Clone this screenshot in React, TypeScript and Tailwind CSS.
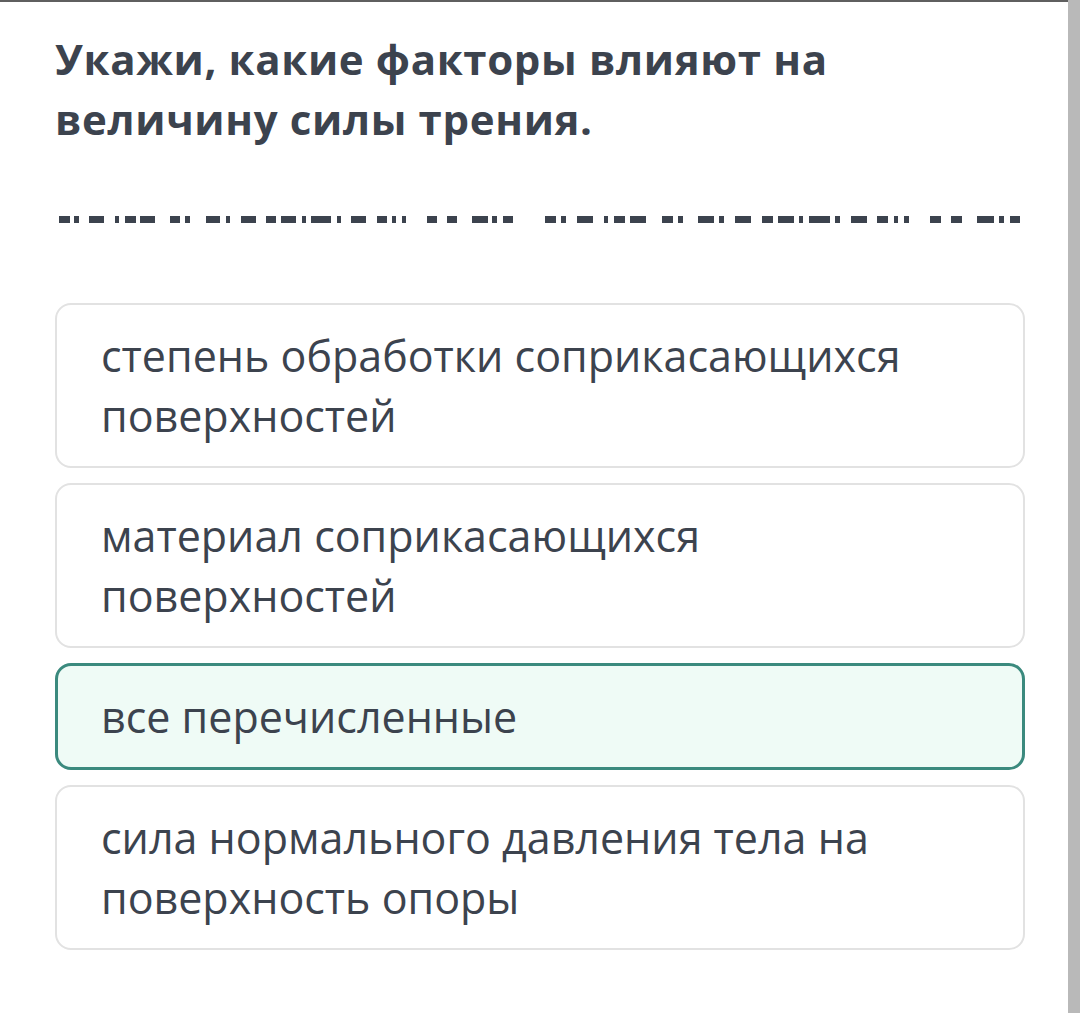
// hidden answer placeholder: block positions [left, right] in page px
const runA: [number, number][] = [
  [59, 70], [74, 79], [89, 104], [115, 119], [125, 136], [140, 155],
  [170, 180], [185, 190], [206, 220], [226, 230], [241, 256], [266, 276], [281, 296], [302, 306], [311, 331], [337, 341], [351, 366], [377, 387], [392, 396], [402, 406],
  [427, 437], [447, 457], [472, 488], [492, 497], [503, 513],
];
const runB: [number, number][] = [
  [545, 556], [561, 566], [577, 593], [604, 608], [614, 625], [630, 646],
  [662, 673], [678, 683], [698, 714], [719, 724], [735, 751], [762, 773], [778, 794], [799, 803], [809, 830], [835, 840], [851, 867], [877, 888], [894, 898], [904, 909],
  [930, 941], [951, 962], [977, 994], [999, 1004], [1010, 1020],
];

const options = [
  { text: 'степень обработки соприкасающихся поверхностей', selected: false },
  { text: 'материал соприкасающихся поверхностей', selected: false },
  { text: 'все перечисленные', selected: true },
  { text: 'сила нормального давления тела на поверхность опоры', selected: false },
];

function Blanks() {
  let prev = 55;
  return (
    <div className="flex h-[7px] mt-[67px]">
      {[...runA, ...runB].map(([l, r], i) => {
        const gap = l - prev;
        prev = r;
        return <span key={i} className="h-full bg-[#3c434e] shrink-0" style={{ marginLeft: gap, width: r - l }} />;
      })}
    </div>
  );
}

export default function App() {
  return (
    <div className="w-[1080px] h-[1013px] bg-white flex font-['Open_Sans',sans-serif]">
      <div className="flex-1 border-t-2 border-[#5f5f5f]">
        <div className="pl-[55px] pr-[43px] pt-[27px]">
          <h1 className="text-[42px] leading-[60px] font-bold text-[#3c434e] tracking-[0.65px]">
            Укажи, какие факторы влияют на
            <br />
            величину силы трения.
          </h1>
          <Blanks />
          <div className="mt-[80px] flex flex-col gap-[15px]">
            {options.map((o) => (
              <div
                key={o.text}
                className={
                  o.selected
                    ? 'rounded-[16px] border-[3px] border-[#3b8a7e] bg-[#effbf6] px-[43px] py-[20.5px]'
                    : 'rounded-[16px] border-2 border-[#e2e2e2] bg-white px-[44px] py-[20.5px]'
                }
              >
                <p className="text-[43px] leading-[60px] text-[#3c434e]">{o.text}</p>
              </div>
            ))}
          </div>
        </div>
      </div>
      <div className="w-[12px] bg-[#b9b9b9]" />
    </div>
  );
}
